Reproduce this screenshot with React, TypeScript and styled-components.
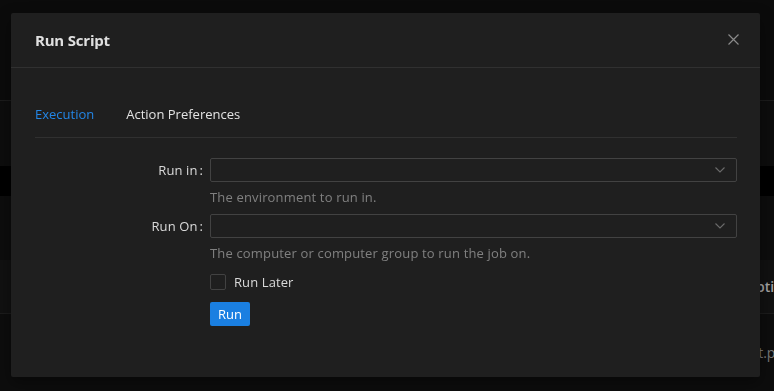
import React from "react";
import styled, { createGlobalStyle } from "styled-components";

const Global = createGlobalStyle`
  html, body { margin: 0; padding: 0; background: #0a0a0a; }
  body { font-family: "Open Sans", "Noto Sans", sans-serif; overflow: hidden; }
  * { box-sizing: border-box; }
`;

const Page = styled.div`
  width: 774px;
  height: 391px;
  display: flex;
  flex-direction: column;
  background: #0a0a0a;
  overflow: hidden;
`;

const BgRow = styled.div<{ $h: number; $bg: string; $line?: boolean; $pl?: number }>`
  height: ${(p) => p.$h}px;
  flex: none;
  background: ${(p) => p.$bg};
  border-bottom: ${(p) => (p.$line ? "1px solid #1c1c1c" : "none")};
  display: flex;
  align-items: center;
  padding-left: ${(p) => p.$pl ?? 745}px;
  white-space: nowrap;
  overflow: clip;
`;

const BgText = styled.span<{ $strong?: boolean }>`
  font-size: 14px;
  color: ${(p) => (p.$strong ? "#a6a6a6" : "#7a7a7a")};
  font-weight: ${(p) => (p.$strong ? 600 : 400)};
`;

const Overlay = styled.div`
  position: fixed;
  inset: 0;
  padding: 13px 14px 14px 11px;
  display: flex;
`;

const Modal = styled.div`
  flex: 1;
  background: #1f1f1f;
  border-radius: 2px;
  display: flex;
  flex-direction: column;
  box-shadow: 0 6px 16px rgba(0, 0, 0, 0.4);
`;

const Header = styled.div`
  height: 55px;
  padding: 0 17px 0 24px;
  display: flex;
  align-items: center;
  justify-content: space-between;
  border-bottom: 1px solid #303030;
`;

const Title = styled.div`
  font-size: 15px;
  font-weight: 700;
  color: #e0e0e0;
  letter-spacing: -0.2px;
`;

const CloseBtn = styled.button`
  width: 20px;
  height: 20px;
  padding: 0;
  border: none;
  background: transparent;
  display: flex;
  align-items: center;
  justify-content: center;
  cursor: pointer;
  margin-top: -2px;
`;

const Body = styled.div`
  padding: 23px 23px 0 24px;
  display: flex;
  flex-direction: column;
`;

const TabBar = styled.div`
  display: flex;
  gap: 32px;
  border-bottom: 1px solid #303030;
`;

const Tab = styled.div<{ $active?: boolean }>`
  padding: 12px 0;
  line-height: 22px;
  font-size: 13px;
  color: ${(p) => (p.$active ? "#2386e6" : "#e3e3e3")};
`;

const Form = styled.div`
  padding-top: 20px;
  display: flex;
  flex-direction: column;
`;

const Item = styled.div<{ $mb?: number }>`
  display: grid;
  grid-template-columns: 175px 1fr;
  margin-bottom: ${(p) => p.$mb ?? 6}px;
`;

const Label = styled.label`
  height: 24px;
  display: flex;
  align-items: center;
  justify-content: flex-end;
  padding-right: 7px;
  font-size: 13px;
  letter-spacing: 0.1px;
  color: #d9d9d9;
  &::after {
    content: ":";
    margin-left: 2px;
  }
`;

const Control = styled.div`
  display: flex;
  flex-direction: column;
`;

const Select = styled.div`
  height: 24px;
  border: 1px solid #424242;
  border-radius: 2px;
  background: #1f1f1f;
  display: flex;
  align-items: center;
  justify-content: flex-end;
  padding-right: 11px;
`;

const Help = styled.div`
  padding-top: 4px;
  line-height: 22px;
  font-size: 13px;
  letter-spacing: 0.16px;
  color: #808080;
`;

const CheckRow = styled.label`
  height: 24px;
  display: flex;
  align-items: center;
  gap: 8px;
  font-size: 13px;
  letter-spacing: 0.1px;
  color: #d9d9d9;
`;

const Box = styled.span`
  width: 16px;
  height: 16px;
  border: 1px solid #424242;
  border-radius: 2px;
  background: #1f1f1f;
`;

const Button = styled.button`
  width: 40px;
  height: 24px;
  border: none;
  border-radius: 2px;
  background: #1a7fe1;
  color: #fff;
  font-family: inherit;
  font-size: 13px;
  padding: 0;
  cursor: pointer;
`;

const Chevron = () => (
  <svg width="10" height="6" viewBox="0 0 10 6" fill="none">
    <path d="M0.5 0.5 L5 5 L9.5 0.5" stroke="#6b6b6b" strokeWidth="1.1" />
  </svg>
);

const CloseIcon = () => (
  <svg width="11" height="11" viewBox="0 0 11 11" fill="none">
    <path d="M0.5 0.5 L10.5 10.5 M10.5 0.5 L0.5 10.5" stroke="#8a8a8a" strokeWidth="1.2" />
  </svg>
);

export default function App() {
  return (
    <>
      <Global />
      <Page>
        <BgRow $h={101} $bg="#0b0b0b" $line />
        <BgRow $h={65} $bg="#0d0d0d" />
        <BgRow $h={30} $bg="#000000" />
        <BgRow $h={64} $bg="#0d0d0d" />
        <BgRow $h={54} $bg="#111111" $line>
          <BgText $strong>Options</BgText>
        </BgRow>
        <BgRow $h={77} $bg="#0d0d0d" $pl={727}>
          <BgText>script.ps1</BgText>
        </BgRow>
      </Page>
      <Overlay>
        <Modal>
          <Header>
            <Title>Run Script</Title>
            <CloseBtn aria-label="Close">
              <CloseIcon />
            </CloseBtn>
          </Header>
          <Body>
            <TabBar>
              <Tab $active>Execution</Tab>
              <Tab>Action Preferences</Tab>
            </TabBar>
            <Form>
              <Item>
                <Label>Run in</Label>
                <Control>
                  <Select>
                    <Chevron />
                  </Select>
                  <Help>The environment to run in.</Help>
                </Control>
              </Item>
              <Item>
                <Label>Run On</Label>
                <Control>
                  <Select>
                    <Chevron />
                  </Select>
                  <Help>The computer or computer group to run the job on.</Help>
                </Control>
              </Item>
              <Item $mb={8}>
                <span />
                <CheckRow>
                  <Box />
                  Run Later
                </CheckRow>
              </Item>
              <Item>
                <span />
                <div>
                  <Button>Run</Button>
                </div>
              </Item>
            </Form>
          </Body>
        </Modal>
      </Overlay>
    </>
  );
}
